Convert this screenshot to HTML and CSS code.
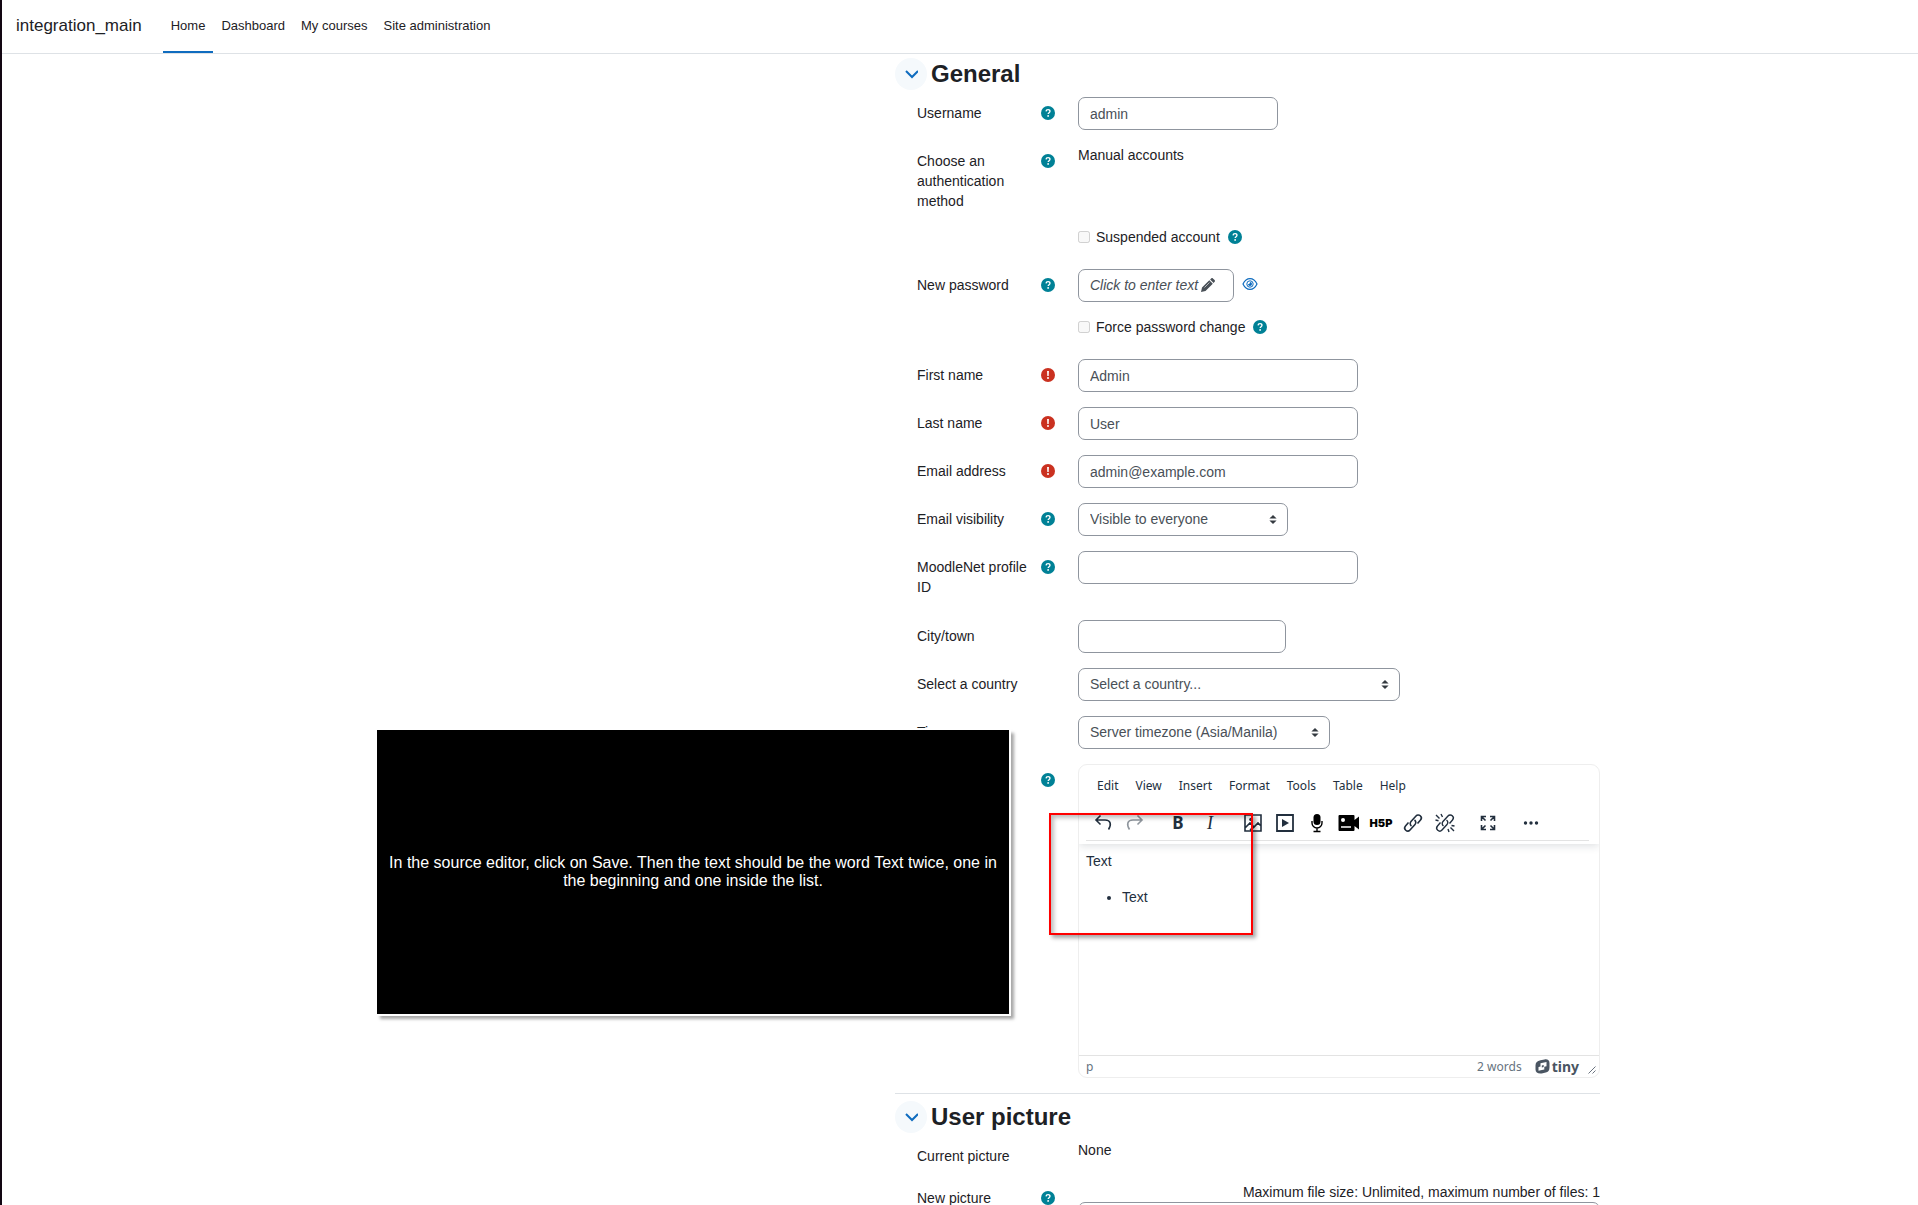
FILE: index.html
```html
<!DOCTYPE html>
<html lang="en">
<head>
    <meta charset="utf-8">
    <title>Edit profile | integration_main</title>
    <link rel="stylesheet" href="styles.css">
</head>
<body>
    <!-- Shared icons -->
    <svg class="icon-defs" width="0" height="0">
        <symbol id="icon-help" viewBox="0 0 512 512">
            <circle cx="256" cy="256" r="256" fill="#008196"/>
            <path d="M184 196c4-40 32-62 74-62 42 0 70 24 70 60 0 50-66 50-66 100" fill="none" stroke="#fff" stroke-width="50"/>
            <circle cx="261" cy="362" r="34" fill="#fff"/>
        </symbol>
        <symbol id="icon-required" viewBox="0 0 512 512">
            <circle cx="256" cy="256" r="256" fill="#ca3120"/>
            <path d="M222 112h68l-9 184h-50z" fill="#fff"/>
            <circle cx="256" cy="364" r="36" fill="#fff"/>
        </symbol>
        <symbol id="icon-chevron" viewBox="0 0 14 14">
            <path d="M2 4l6 6 6-6" fill="none" stroke="#0f6cbf" stroke-width="2"/>
        </symbol>
    </svg>

    <!-- Top navigation -->
    <nav class="navbar">
        <a class="navbar-brand" href="#">integration_main</a>
        <a class="nav-link active" href="#">Home</a>
        <a class="nav-link" href="#">Dashboard</a>
        <a class="nav-link" href="#">My courses</a>
        <a class="nav-link" href="#">Site administration</a>
    </nav>

    <form class="profile-form">
        <section class="fieldset">
            <div class="fieldset-header">
                <button type="button" class="collapse-button" aria-label="Collapse General"><svg class="chevron"><use href="#icon-chevron"/></svg></button>
                <h3>General</h3>
            </div>

            <div class="form-row">
                <div class="form-label"><label for="username">Username</label><svg class="icon"><use href="#icon-help"/></svg></div>
                <div class="form-field"><input type="text" class="form-control w-username" id="username" value="admin"></div>
            </div>
            <div class="form-row static">
                <div class="form-label"><span>Choose an authentication method</span><svg class="icon"><use href="#icon-help"/></svg></div>
                <div class="form-field">Manual accounts</div>
            </div>
            <div class="form-row check">
                <div class="form-field">
                    <input type="checkbox" id="suspended" disabled>
                    <label for="suspended">Suspended account</label>
                    <svg class="icon"><use href="#icon-help"/></svg>
                </div>
            </div>
            <div class="form-row">
                <div class="form-label"><span>New password</span><svg class="icon"><use href="#icon-help"/></svg></div>
                <div class="form-field">
                    <button type="button" class="form-control password-button">
                        <em>Click to enter text</em>
                        <svg class="icon" viewBox="0 0 14 14"><path d="M0 14l1-4.500L8.300 2.200l3.500 3.500L4.500 13zM9.100 1.400L10.200.400c.5-.5 1.200-.5 1.700 0l1.700 1.700c.5.500.5 1.200 0 1.700l-1 1.100z" fill="#495057"/><path d="M3.500 9.500l5-5" stroke="#fff" stroke-width=".6"/></svg>
                    </button>
                    <a class="reveal" href="#" aria-label="Reveal"><svg width="16" height="14" viewBox="0 0 16 14"><path d="M1 7c1.700-3.600 4-5.400 7-5.400s5.300 1.800 7 5.400c-1.700 3.600-4 5.400-7 5.400S2.700 10.600 1 7z" fill="none" stroke="#0f6cbf" stroke-width="1.200"/><circle cx="8" cy="7" r="3.200" fill="none" stroke="#0f6cbf" stroke-width="1"/><path d="M8 5a2 2 0 1 1-2 2c1.200.300 2-.7 2-2z" fill="#0f6cbf"/></svg></a>
                </div>
            </div>
            <div class="form-row check">
                <div class="form-field">
                    <input type="checkbox" id="forcepassword" disabled>
                    <label for="forcepassword">Force password change</label>
                    <svg class="icon"><use href="#icon-help"/></svg>
                </div>
            </div>
            <div class="form-row">
                <div class="form-label"><label for="firstname">First name</label><svg class="icon"><use href="#icon-required"/></svg></div>
                <div class="form-field"><input type="text" class="form-control w-text" id="firstname" value="Admin"></div>
            </div>
            <div class="form-row">
                <div class="form-label"><label for="lastname">Last name</label><svg class="icon"><use href="#icon-required"/></svg></div>
                <div class="form-field"><input type="text" class="form-control w-text" id="lastname" value="User"></div>
            </div>
            <div class="form-row">
                <div class="form-label"><label for="email">Email address</label><svg class="icon"><use href="#icon-required"/></svg></div>
                <div class="form-field"><input type="text" class="form-control w-text" id="email" value="admin@example.com"></div>
            </div>
            <div class="form-row">
                <div class="form-label"><label for="maildisplay">Email visibility</label><svg class="icon"><use href="#icon-help"/></svg></div>
                <div class="form-field"><select class="form-control w-visibility" id="maildisplay"><option>Visible to everyone</option></select></div>
            </div>
            <div class="form-row wrapped">
                <div class="form-label"><label for="moodlenet">MoodleNet profile ID</label><svg class="icon"><use href="#icon-help"/></svg></div>
                <div class="form-field"><input type="text" class="form-control w-text" id="moodlenet"></div>
            </div>
            <div class="form-row">
                <div class="form-label"><label for="city">City/town</label></div>
                <div class="form-field"><input type="text" class="form-control w-city" id="city"></div>
            </div>
            <div class="form-row">
                <div class="form-label"><label for="country">Select a country</label></div>
                <div class="form-field"><select class="form-control w-country" id="country"><option>Select a country...</option></select></div>
            </div>
            <div class="form-row">
                <div class="form-label"><label for="timezone">Timezone</label></div>
                <div class="form-field"><select class="form-control w-timezone" id="timezone"><option>Server timezone (Asia/Manila)</option></select></div>
            </div>
            <div class="form-row">
                <div class="form-label"><span>Description</span><svg class="icon"><use href="#icon-help"/></svg></div>
                <div class="editor">
                    <div class="editor-header">
                        <div class="editor-menubar">
                            <button type="button">Edit</button>
                            <button type="button">View</button>
                            <button type="button">Insert</button>
                            <button type="button">Format</button>
                            <button type="button">Tools</button>
                            <button type="button">Table</button>
                            <button type="button">Help</button>
                        </div>
                        <div class="editor-toolbar">
                            <div class="toolbar-group">
                                <button type="button" aria-label="Undo"><svg viewBox="0 0 22 22"><path d="M8.500 3.500L4 8l4.500 4.500M4 8h9c6 0 6.500 5 3.500 9.500" fill="none" stroke="#222f3e" stroke-width="1.600"/></svg></button>
                                <button type="button" aria-label="Redo" class="disabled"><svg viewBox="0 0 22 22"><path d="M13.500 3.500L18 8l-4.500 4.500M18 8H9c-6 0-6.500 5-3.500 9.500" fill="none" stroke="#222f3e" stroke-width="1.600"/></svg></button>
                            </div>
                            <div class="toolbar-group">
                                <button type="button" class="bold">B</button>
                                <button type="button" class="italic">I</button>
                            </div>
                            <div class="toolbar-group">
                                <button type="button" aria-label="Image"><svg viewBox="0 0 22 22"><path d="M3 3h16v16H3zM3 16l5-5 4 4 4-4 3 3M8 18l4-3" fill="none" stroke="#222f3e" stroke-width="1.600"/><circle cx="9" cy="7.500" r="1.800" fill="#222f3e"/></svg></button>
                                <button type="button" aria-label="Multimedia"><svg viewBox="0 0 22 22"><path d="M3 3h16v16H3z" fill="none" stroke="#222f3e" stroke-width="1.800"/><path d="M8 7l7 4-7 4z" fill="#222f3e"/></svg></button>
                                <button type="button" aria-label="Record audio"><svg viewBox="0 0 22 22"><rect x="7.500" y="2" width="7" height="11" rx="3.500"/><path d="M6 9v2a5 5 0 0 0 10 0V9M11 16v3.500M7.500 19.500h7" fill="none" stroke="#000" stroke-width="1.400"/></svg></button>
                                <button type="button" aria-label="Record video"><svg viewBox="0 0 22 22"><path d="M1.500 3h14q1 0 1 1v4L21 4.500v13L16.500 14v4q0 1-1 1h-14q-1 0-1-1V4q0-1 1-1z"/><circle cx="5" cy="8" r="2" fill="#fff"/><path d="M3 15h10" stroke="#fff" stroke-width="1.500"/></svg></button>
                                <button type="button" class="h5p">H5P</button>
                                <button type="button" aria-label="Link"><svg viewBox="0 0 22 22"><path d="M9.500 14a3 3 0 0 1-.500-4.500l5-5.500a3 3 0 0 1 4.500 4l-3 3.500M12.500 8a3 3 0 0 1 .500 4.500l-5 5.500a3 3 0 0 1-4.500-4l3-3.500" fill="none" stroke="#222f3e" stroke-width="1.600"/></svg></button>
                                <button type="button" aria-label="Unlink"><svg viewBox="0 0 22 22"><path d="M9.500 14a3 3 0 0 1-.500-4.500l5-5.500a3 3 0 0 1 4.500 4l-3 3.500M12.500 8a3 3 0 0 1 .500 4.500l-5 5.500a3 3 0 0 1-4.500-4l3-3.500M7 2l1.500 3M2 3l3.500 3.500M1.500 8l3 .8M15 20l-1-3M20 19l-3.500-3.500M20.500 14l-3-.5" fill="none" stroke="#222f3e" stroke-width="1.400"/></svg></button>
                            </div>
                            <div class="toolbar-group">
                                <button type="button" aria-label="Fullscreen"><svg viewBox="0 0 22 22"><path d="M4.500 9V4.500H9M13 4.500h4.500V9M17.500 13v4.500H13M9 17.500H4.500V13M4.500 4.500l4 4M17.500 4.500l-4 4M17.500 17.500l-4-4M4.500 17.500l4-4" fill="none" stroke="#222f3e" stroke-width="1.600"/></svg></button>
                            </div>
                            <div class="toolbar-group">
                                <button type="button" aria-label="More"><svg viewBox="0 0 22 22"><g fill="#222f3e"><circle cx="5.500" cy="11" r="1.700"/><circle cx="11" cy="11" r="1.700"/><circle cx="16.500" cy="11" r="1.700"/></g></svg></button>
                            </div>
                        </div>
                    </div>
                    <div class="editor-content">
                        <p>Text</p>
                        <ul>
                            <li>Text</li>
                        </ul>
                    </div>
                    <div class="editor-statusbar">
                        <span class="path">p</span>
                        <span>2 words</span>
                        <span class="tiny-logo"><svg width="15" height="15" viewBox="0 0 15 15"><path fill-rule="evenodd" d="M5.500 1.200L9.500.400C12.500-.1 14.500 1.200 14.500 4v4.500c0 3-1.300 4.400-3.800 5l-4 .9C3.200 15 .5 13.500.5 10.500V6.500C.5 3.400 2.200 1.900 5.500 1.200zM5.500 4.300v3.200L3.500 8v3.700l5.800-1.300V7.700l2.200-.5V3z" fill="#4a5562"/><path d="M6.800 6.500l1.900-.4v2l-1.900.4z" fill="#4a5562"/></svg>tiny</span>
                        <svg class="resize" width="8" height="8" viewBox="0 0 8 8"><path d="M.5 7.500l7-7M4.500 7.500l3-3" stroke="#6b7480" fill="none"/></svg>
                    </div>
                </div>
            </div>
        </section>

        <section class="fieldset">
            <div class="fieldset-header">
                <button type="button" class="collapse-button" aria-label="Collapse User picture"><svg class="chevron"><use href="#icon-chevron"/></svg></button>
                <h3>User picture</h3>
            </div>
            <div class="form-row static">
                <div class="form-label"><span>Current picture</span></div>
                <div class="form-field">None</div>
            </div>
            <div class="form-row">
                <div class="form-label"><span>New picture</span><svg class="icon"><use href="#icon-help"/></svg></div>
                <div class="filemanager">
                    <div class="restrictions">Maximum file size: Unlimited, maximum number of files: 1</div>
                    <div class="filemanager-box"></div>
                </div>
            </div>
        </section>
    </form>

    <!-- Annotations over the page -->
    <div class="note">In the source editor, click on Save. Then the text should be the word Text twice, one in the beginning and one inside the list.</div>
    <div class="highlight"></div>
</body>
</html>
```

FILE: styles.css
```css
* {
    box-sizing: border-box;
}

body {
    margin: 0;
    height: 100vh;
    overflow: hidden;
    position: relative;
    border-left: 2px solid #120612;
    background: #fff;
    color: #1d2125;
    font-family: "Liberation Sans", Arial, sans-serif;
    font-size: 14px;
    line-height: 20px;
}

button, input, select {
    font: inherit;
    color: inherit;
}

button {
    padding: 0;
    border: 0;
    background: none;
    cursor: pointer;
}

a {
    color: inherit;
    text-decoration: none;
}

.icon-defs {
    position: absolute;
}

.icon {
    width: 14px;
    height: 14px;
    flex: none;
}

/* Top navigation */
.navbar {
    display: flex;
    align-items: stretch;
    height: 54px;
    padding-left: 14px;
    border-bottom: 1px solid #dee2e6;
    line-height: 50px;
    font-size: 13px;
}

.navbar-brand {
    margin-right: 21px;
    padding-top: 1px;
    font-size: 17px;
}

.nav-link {
    padding: 1px 8px 0;
    border-bottom: 2px solid transparent;
}

.nav-link.active {
    border-bottom-color: #0f6cbf;
}

/* Form */
.profile-form {
    width: 705px;
    margin-left: auto;
    margin-right: 318px;
    padding-top: 4px;
}

.fieldset + .fieldset {
    border-top: 1px solid #dee2e6;
    padding-top: 7px;
}

.fieldset-header {
    display: flex;
    align-items: center;
    gap: 4px;
    margin-bottom: 7px;
}

.fieldset-header h3 {
    margin: 0;
    font-size: 24px;
    line-height: 32px;
}

.collapse-button {
    display: flex;
    align-items: center;
    justify-content: center;
    width: 32px;
    height: 32px;
    border-radius: 50%;
    background: #f5f9fc;
}

.chevron {
    width: 14px;
    height: 14px;
}

.form-row {
    display: grid;
    grid-template-columns: 138px 1fr;
    column-gap: 23px;
    align-items: start;
    margin-bottom: 15px;
    padding-left: 22px;
}

.form-row.static {
    margin-bottom: 9px;
}

.form-row.wrapped {
    margin-bottom: 16px;
}

.form-row.check {
    padding-bottom: 7px;
}

.form-row.check .form-field {
    grid-column: 2;
}

.form-label {
    display: flex;
    justify-content: space-between;
    padding: 6px 0 7px;
}

.form-label span,
.form-label label {
    max-width: 115px;
}

.form-label .icon {
    margin-top: 3px;
}

.form-field {
    display: flex;
    align-items: center;
}

.check input {
    width: 12px;
    height: 12px;
    margin: 0 6px 0 0;
}

.check .icon {
    margin-left: 8px;
}

.form-control {
    height: 33px;
    padding: 0 11px;
    border: 1px solid #8f959e;
    border-radius: 7px;
    background: #fff;
    color: #495057;
}

select.form-control {
    padding-bottom: 1px;
    appearance: none;
    background: #fff url("data:image/svg+xml,%3Csvg xmlns='http://www.w3.org/2000/svg' viewBox='0 0 4 5'%3E%3Cpath fill='%23343a40' d='M2 0L0 2h4zm0 5L0 3h4z'/%3E%3C/svg%3E") no-repeat right 10px center / 8px 9px;
}

.w-username { width: 200px; }
.w-text { width: 280px; }
.w-visibility { width: 210px; }
.w-city { width: 208px; }
.w-country { width: 322px; }
.w-timezone { width: 252px; }

.password-button {
    display: flex;
    align-items: center;
    gap: 3px;
    width: 156px;
    padding-bottom: 2px;
    white-space: nowrap;
}

.reveal {
    display: flex;
    margin-left: 8px;
    padding-bottom: 3px;
}

/* Text editor */
.editor {
    display: flex;
    flex-direction: column;
    height: 314px;
    border: 1px solid #eee;
    border-radius: 9px;
    overflow: hidden;
    color: #222f3e;
    font-family: "Noto Sans", sans-serif;
    font-size: 12px;
}

.editor-header {
    padding: 4px 10px 3px 7px;
    box-shadow: 0 2px 8px rgba(34, 47, 62, 0.15);
}

.editor-menubar {
    display: flex;
    gap: 17px;
    height: 34px;
    padding-left: 11px;
}

.editor-toolbar {
    display: flex;
    gap: 11px;
    height: 38px;
    padding: 3px 0 0 1px;
    border-bottom: 1px solid #e3e3e3;
}

.toolbar-group {
    display: flex;
}

.toolbar-group button {
    display: flex;
    align-items: center;
    justify-content: center;
    width: 32px;
}

.toolbar-group svg {
    width: 22px;
    height: 22px;
}

.toolbar-group .disabled {
    opacity: 0.5;
}

.toolbar-group .bold {
    font-size: 17px;
    font-weight: bold;
}

.toolbar-group .italic {
    font-family: "Liberation Serif", serif;
    font-size: 18px;
    font-style: italic;
}

.toolbar-group .h5p {
    color: #000;
    font-family: Inter, sans-serif;
    font-size: 11px;
    font-weight: 900;
}

.editor-content {
    flex: 1;
    padding: 7px;
    font-family: "Liberation Sans", Arial, sans-serif;
    font-size: 14px;
}

.editor-content p,
.editor-content ul {
    margin: 0 0 16px;
}

.editor-content ul {
    padding-left: 36px;
}

.editor-statusbar {
    display: flex;
    align-items: center;
    height: 22px;
    padding: 0 3px 0 7px;
    border-top: 1px solid #e3e3e3;
    color: #667380;
}

.editor-statusbar .path {
    margin-right: auto;
}

.tiny-logo {
    display: flex;
    align-items: center;
    gap: 2px;
    margin: 0 9px 0 13px;
    color: #4a5562;
    font-size: 14px;
    font-weight: bold;
}

.resize {
    align-self: flex-end;
    margin-bottom: 3px;
}

/* File manager */
.restrictions {
    text-align: right;
}

.filemanager-box {
    height: 120px;
    border: 1px solid #8f959e;
    border-radius: 7px;
}

/* Annotations */
.note {
    position: absolute;
    left: 375px;
    top: 730px;
    display: flex;
    align-items: center;
    width: 632px;
    height: 284px;
    padding: 0 12px;
    background: #000;
    color: #fff;
    box-shadow: 0 0 0 2px #fff, 4px 4px 3px 1px rgba(0, 0, 0, 0.35);
    font-size: 16px;
    line-height: 18px;
    text-align: center;
}

.highlight {
    position: absolute;
    left: 1047px;
    top: 813px;
    width: 204px;
    height: 122px;
    border: 2px solid #f00;
    box-shadow: 3px 3px 4px rgba(0, 0, 0, 0.35), inset 3px 3px 4px rgba(0, 0, 0, 0.25);
}
```
